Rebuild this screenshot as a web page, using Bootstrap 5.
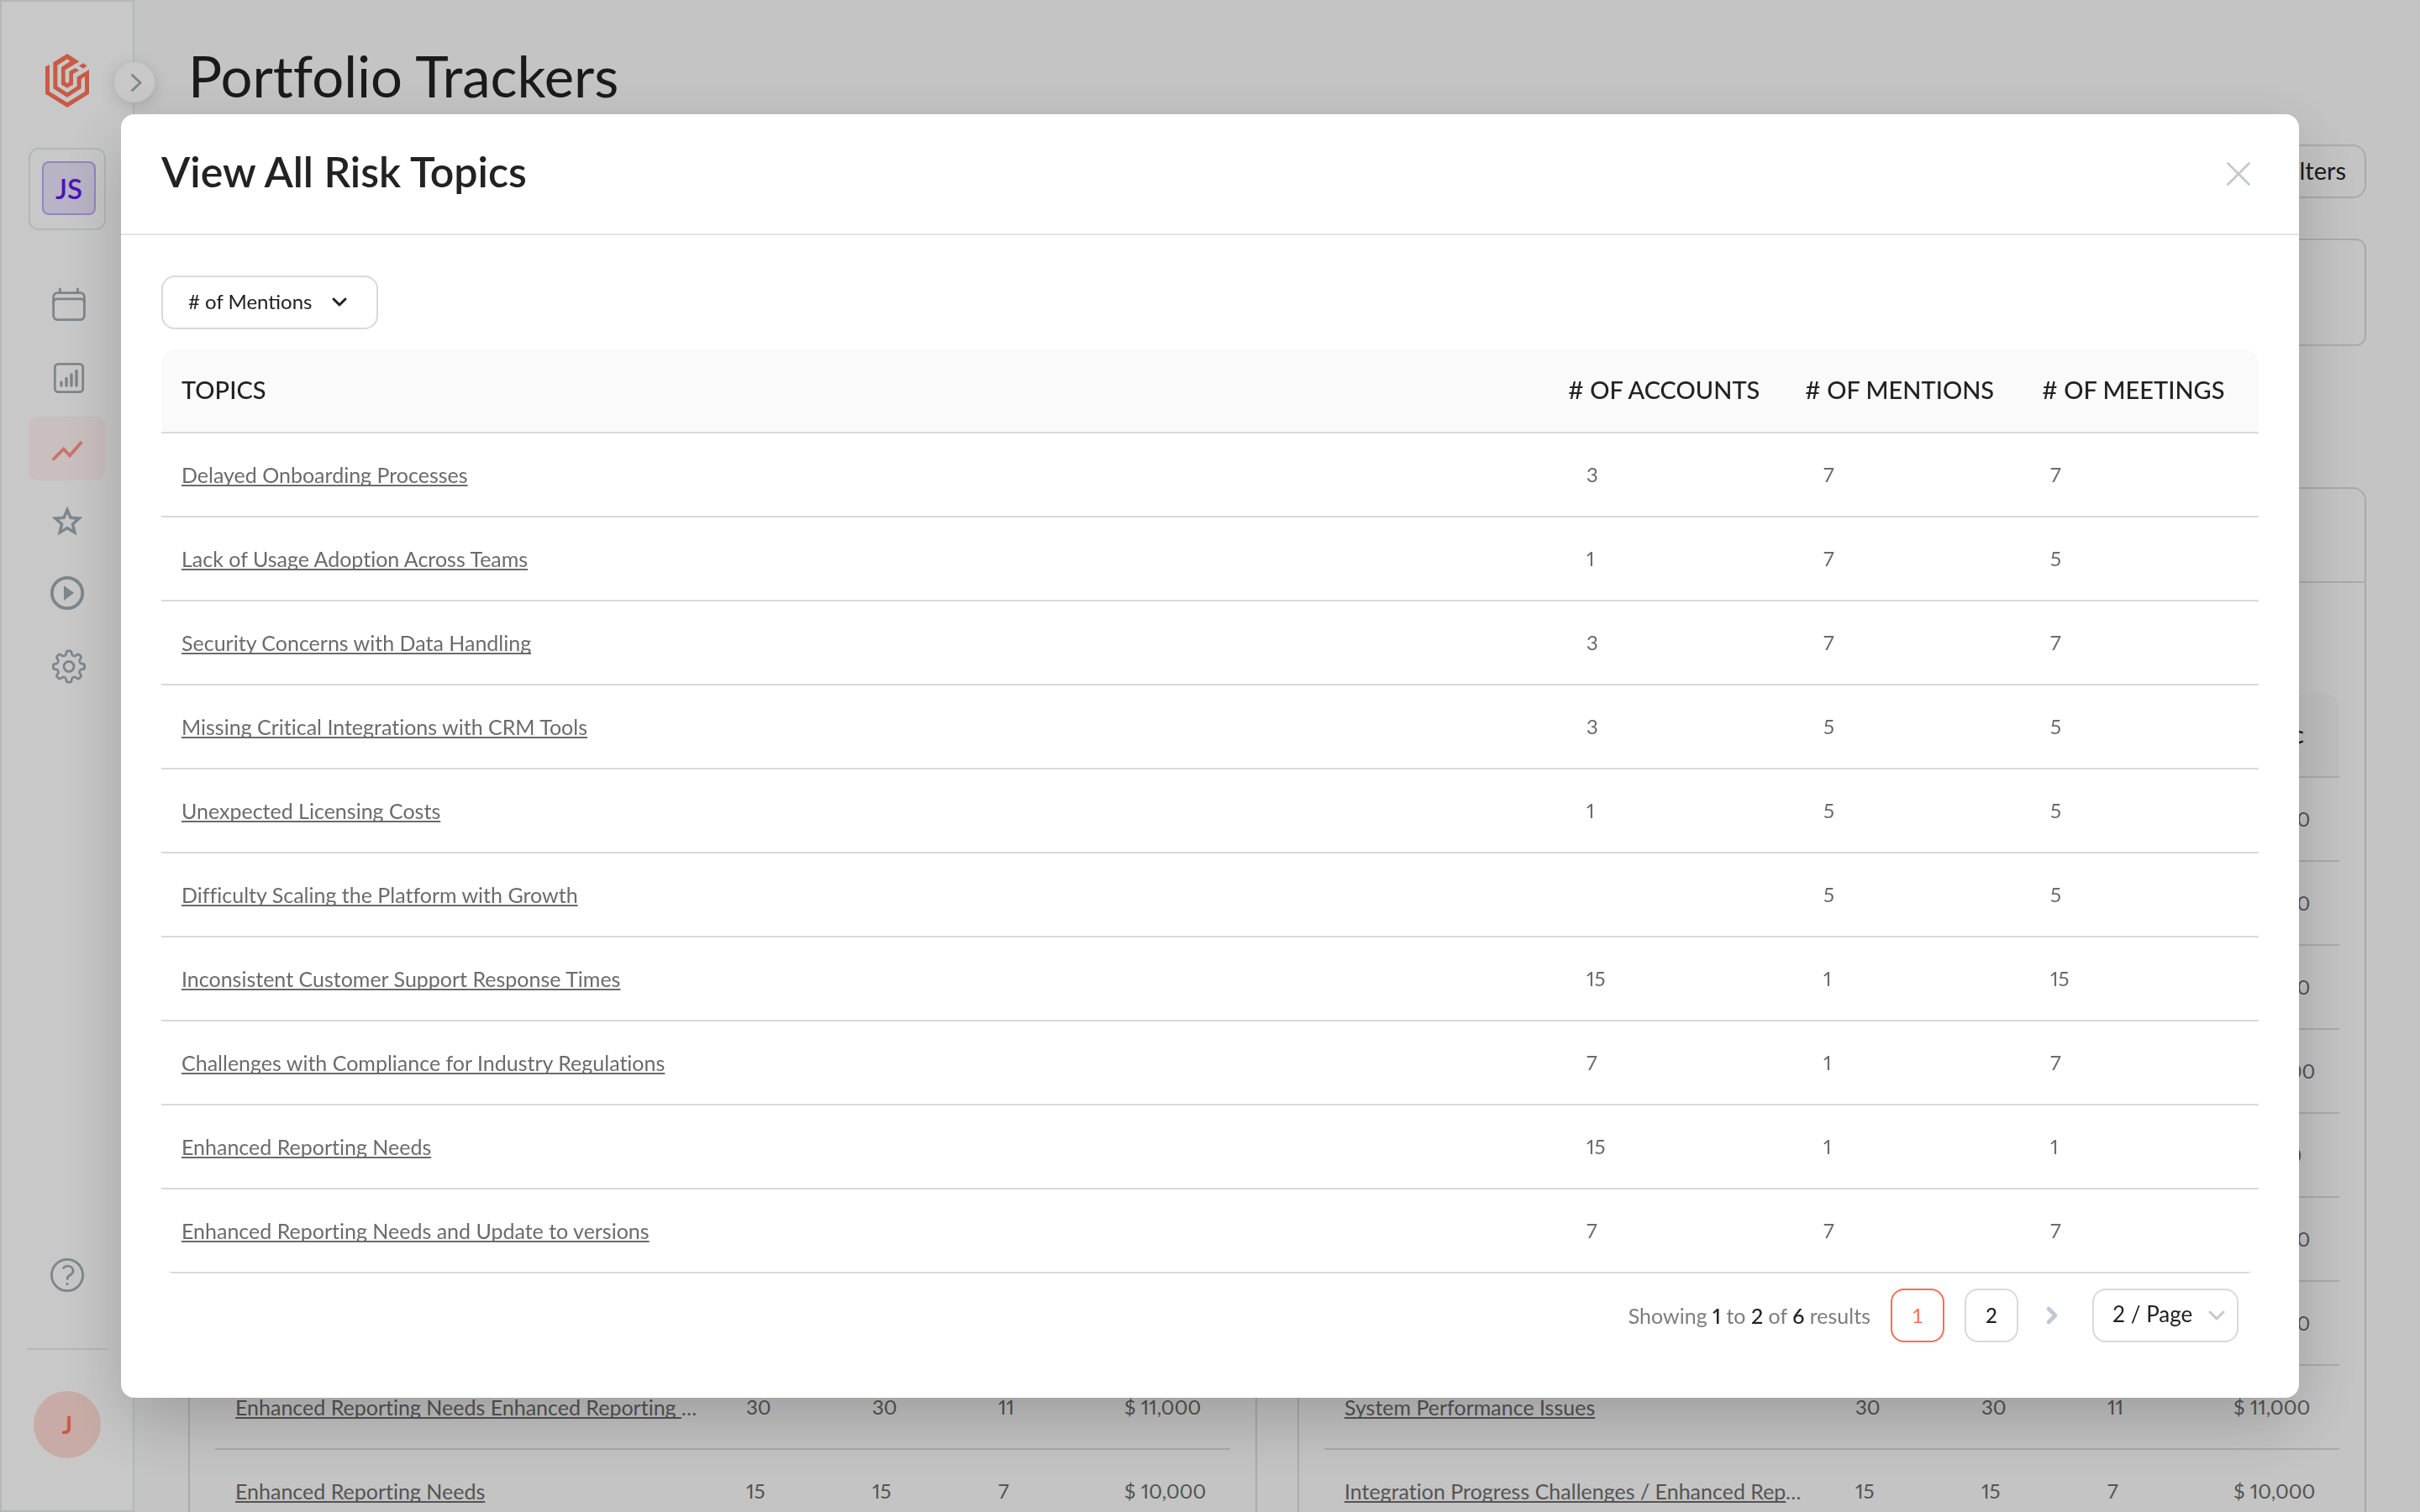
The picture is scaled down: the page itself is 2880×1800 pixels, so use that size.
<!DOCTYPE html>
<html lang="en">
<head>
<meta charset="utf-8">
<meta name="viewport" content="width=device-width, initial-scale=1">
<title>Portfolio Trackers</title>
<link href="https://cdn.jsdelivr.net/npm/bootstrap@5.3.0/dist/css/bootstrap.min.css" rel="stylesheet">
<style>
  :root {
    --ink: #222222;
    --muted: #6b6b6b;
    --line: #d9d9d9;
    --side-line: #e4ebe9;
    --icon: #9fabb3;
    --brand: #ff745a;
    --radius: 16px;
  }
  body {
    font-family: Lato, "Liberation Sans", sans-serif;
    font-size: 24px;
    font-variant-numeric: proportional-nums;
    font-variant-ligatures: none;
    line-height: 32px;
    color: var(--ink);
    background: #fafafa;
  }

  /* Sidebar */
  .side-rail {
    width: 160px;
    padding: 62px 0;
    border: 2px solid var(--side-line);
    background: #fff;
    color: var(--icon);
  }
  .side-rail svg { display: block; }
  .rail-toggle {
    top: 74px;
    left: 136px;
    width: 48px;
    height: 48px;
    background: #fff;
    color: var(--icon);
    box-shadow: 0 4px 20px rgba(0, 0, 0, .16);
  }
  .team-box {
    width: 92px;
    height: 98px;
    margin: 48px 0 50px;
    padding: 14px 10px 14px 14px;
    border: 2px solid var(--side-line);
    border-radius: 12px;
  }
  .team-tile {
    height: 64px;
    border: 2px solid #bba9fb;
    border-radius: 8px;
    background: #ebe4fc;
    color: #6319eb;
    font-size: 33px;
    font-weight: 600;
  }
  .rail-links { gap: 10px; }
  .rail-links a, .rail-help { color: inherit; }
  .rail-links a { width: 92px; height: 76px; border-radius: 12px; }
  .rail-links a.active { background: #fff4f2; color: #ff9584; }
  .rail-rule { width: 96px; height: 2px; margin: 63px 0 49px; background: var(--side-line); }
  .user-dot {
    width: 80px;
    height: 80px;
    background: #ffdbd4;
    color: var(--brand);
    font-size: 29px;
    font-weight: 700;
  }

  /* Page behind the dialog */
  .page-main { padding: 50px 64px 48px; }
  .page-title { font-size: 67px; font-weight: 400; line-height: 80px; }
  .outline-btn {
    height: 64px;
    padding: 0 22px 2px;
    border: 2px solid var(--line);
    border-radius: var(--radius);
    background: transparent;
    color: var(--ink);
    font-size: 29px;
  }
  .tool-row { margin: 42px 0 48px; }
  .summary-box { height: 128px; border: 2px solid var(--line); border-radius: 12px; }
  .section-title { margin: 60px 0; font-size: 29px; line-height: 48px; }
  .card-grid { gap: 48px; }
  .tracker { flex: 1 1 0; min-width: 0; border: 2px solid var(--line); border-radius: var(--radius); }
  .tracker-head { height: 112px; padding: 0 30px; border-bottom: 2px solid var(--line); font-size: 29px; }
  .tracker-body { padding: 32px 30px; }
  .tracker-tools { height: 68px; margin-bottom: 32px; }

  /* Tables */
  .topic-table { table-layout: fixed; width: 100%; border-collapse: separate; border-spacing: 0; }
  .topic-table th {
    height: 100px;
    padding: 0 0 2px 24px;
    border-bottom: 2px solid var(--line);
    background: #fafafa;
    font-size: 29px;
    font-weight: 500;
    white-space: nowrap;
  }
  .topic-table td {
    height: 100px;
    padding: 0 24px;
    border-bottom: 2px solid var(--line);
    color: var(--muted);
    white-space: nowrap;
  }
  .topic-table td.text-truncate { padding-right: 32px; }
  .topic-table a {
    color: inherit;
    font-size: 25px;
    text-decoration-skip-ink: none;
    text-underline-offset: 2px;
  }
  .rounded-wrap { border-radius: var(--radius); overflow: hidden; }
  .tracker .topic-table th { background: #f5f5f5; }
  .tracker col.num { width: 150px; }
  .tracker td:nth-child(n+2) { padding-right: 0; }
  .risk-modal col.num { width: 282px; }
  .risk-modal td:nth-child(n+2) { padding-left: 46px; }
  .risk-modal td:nth-child(4) { padding-left: 34px; }

  /* Dialog */
  .modal-backdrop { --bs-backdrop-bg: #000; --bs-backdrop-opacity: .216; }
  .risk-modal .modal-dialog { max-width: none; margin: 136px 144px; }
  .risk-modal .modal-content {
    border: 0;
    border-radius: var(--radius);
    color: var(--ink);
    box-shadow: 0 28px 80px rgba(0, 0, 0, .2);
  }
  .risk-modal .modal-header {
    padding: 37px 48px 43px;
    border-bottom: 2px solid #e4e4e4;
  }
  .risk-modal .modal-title { font-size: 50px; font-weight: 600; line-height: 62px; }
  .icon-btn { border: 0; padding: 0; background: none; color: #c1c8d0; }
  .icon-btn svg { display: block; }
  .risk-modal .modal-body { padding: 48px 48px 66px; }
  .pick {
    height: 64px;
    padding: 0 0 3px 30px;
    border: 2px solid var(--line);
    border-radius: var(--radius);
    color: var(--ink);
    font-size: 24px;
    background-color: #fff;
    background-size: 20px 20px;
  }
  .pick-sort {
    width: 258px;
    background-position: right 34px center;
    background-image: url("data:image/svg+xml,%3csvg xmlns='http://www.w3.org/2000/svg' viewBox='0 0 20 20'%3e%3cpath fill='none' stroke='%23222' stroke-width='3' stroke-linecap='round' stroke-linejoin='round' d='M3 6l7 7 7-7'/%3e%3c/svg%3e");
  }
  .pick-size {
    width: 174px;
    padding-left: 22px;
    font-size: 26px;
    background-position: right 14px center;
    background-image: url("data:image/svg+xml,%3csvg xmlns='http://www.w3.org/2000/svg' viewBox='0 0 20 20'%3e%3cpath fill='none' stroke='%23c1c8d0' stroke-width='3' stroke-linecap='round' stroke-linejoin='round' d='M2 6l8 8 8-8'/%3e%3c/svg%3e");
  }
  .pager { gap: 24px; padding: 18px 24px 0 0; }
  .pager-note { color: #7d7d7d; font-size: 25px; }
  .pager-note b { color: var(--ink); font-weight: 500; }
  .page-num {
    width: 64px;
    height: 64px;
    padding: 0;
    border: 2px solid var(--line);
    border-radius: var(--radius);
    background: #fff;
    color: var(--ink);
    font-weight: 500;
  }
  .page-num.current { border-color: #ff6b52; color: #ff6b52; font-weight: 400; }
</style>
</head>
<body class="overflow-hidden">

<div class="d-flex vh-100 overflow-hidden">
  <aside class="side-rail d-flex flex-column align-items-center flex-shrink-0 vh-100">
    <a href="#" aria-label="Home">
      <svg width="52" height="64" viewBox="162 72 156 192" fill="#ff745a"><path d="M162 118 177 111 177 207 240 246 303 207 303 153 290 163 290 196 240 228 190 196 190 103 240 72 283 100 233 130 233 172 240 178 247 172 247 135 268 123 283 131 261 144 261 182 240 194 219 182 219 120 250 99 240 91 205 113 205 188 240 211 275 188 275 155 318 128 318 215 240 264 162 215Z"/><path d="M297 106 311 115 297 125 282 115Z"/></svg>
    </a>
    <div class="team-box"><div class="team-tile d-flex align-items-center justify-content-center">JS</div></div>
    <nav class="rail-links d-flex flex-column" aria-label="Main">
      <a href="#" aria-label="Calendar" class="d-flex align-items-center justify-content-center">
        <svg width="48" height="48" viewBox="0 0 48 48" fill="none" stroke="currentColor" stroke-width="2.800" stroke-linecap="round"><rect x="7.600" y="10.600" width="36.800" height="32" rx="5"/><path d="M7.600 22.400q0-4.600 4.600-4.600h27.600q4.600 0 4.600 4.600M15.400 6v4M36.400 6v4"/></svg>
      </a>
      <a href="#" aria-label="Reports" class="d-flex align-items-center justify-content-center">
        <svg width="48" height="48" viewBox="0 0 48 48" fill="none" stroke="currentColor" stroke-linecap="round"><rect x="9.300" y="9.300" width="33.400" height="33.400" rx="4" stroke-width="2.800"/><path stroke-width="3.400" d="M17 31v4M23 26.500V35M29 22V35M35 17.500V35"/></svg>
      </a>
      <a href="#" aria-label="Trackers" class="active d-flex align-items-center justify-content-center">
        <svg width="48" height="48" viewBox="0 0 48 48" fill="none" stroke="currentColor" stroke-width="3.800"><path d="M6.700 37.500 19.700 24.500 27 32.500 41.300 16"/></svg>
      </a>
      <a href="#" aria-label="Favourites" class="d-flex align-items-center justify-content-center">
        <svg width="48" height="48" viewBox="0 0 48 48" fill="currentColor"><path transform="translate(2.900 3.800) scale(1.760)" stroke="currentColor" stroke-width=".4" d="M22 9.240l-7.190-.62L12 2 9.190 8.630 2 9.240l5.460 4.730L5.820 21 12 17.270 18.180 21l-1.630-7.030L22 9.240zM12 15.400l-3.760 2.270 1-4.280-3.320-2.880 4.380-.38L12 6.100l1.710 4.040 4.380.38-3.320 2.880 1 4.280L12 15.400z"/></svg>
      </a>
      <a href="#" aria-label="Recordings" class="d-flex align-items-center justify-content-center">
        <svg width="48" height="48" viewBox="0 0 48 48"><circle cx="24" cy="24" r="18.200" fill="none" stroke="currentColor" stroke-width="3.800"/><path fill="currentColor" d="M20 15l12 9-12 9z"/></svg>
      </a>
      <a href="#" aria-label="Settings" class="d-flex align-items-center justify-content-center">
        <svg width="48" height="48" viewBox="0 0 48 48" fill="none" stroke="currentColor" stroke-width="2.800">
          <defs><path id="tooth" d="M-5.300-12.800C-4-13.300-3.600-14-3.400-15.200L-3-17Q-2.700-18.600-1.200-18.600L1.200-18.600Q2.700-18.600 3-17L3.400-15.200C3.600-14 4-13.300 5.300-12.800"/></defs>
          <g transform="translate(26 25.500)"><circle r="6"/><use href="#tooth"/><use href="#tooth" transform="rotate(45)"/><use href="#tooth" transform="rotate(90)"/><use href="#tooth" transform="rotate(135)"/><use href="#tooth" transform="rotate(180)"/><use href="#tooth" transform="rotate(225)"/><use href="#tooth" transform="rotate(270)"/><use href="#tooth" transform="rotate(315)"/></g>
        </svg>
      </a>
    </nav>
    <a href="#" aria-label="Help" class="rail-help mt-auto">
      <svg width="48" height="48" viewBox="0 0 48 48" fill="none" stroke="currentColor" stroke-width="2.800" stroke-linecap="round"><circle cx="24" cy="24" r="18.600"/><path d="M19.500 15.500C21 13.500 22.500 13.200 24.300 13.200C28 13.200 31 15.500 31 18.800C31 21.500 29.500 22.800 27.300 24C25 25.200 24.200 26 24.200 28.500"/><circle cx="24" cy="34.300" r="1.600" fill="currentColor" stroke="none"/></svg>
    </a>
    <div class="rail-rule"></div>
    <div class="user-dot rounded-circle d-flex align-items-center justify-content-center">J</div>
    <button type="button" aria-label="Expand menu" class="rail-toggle position-absolute rounded-circle border-0 p-0 d-flex align-items-center justify-content-center">
      <svg width="24" height="24" viewBox="0 0 24 24" fill="none" stroke="currentColor" stroke-width="3" stroke-linecap="round" stroke-linejoin="round"><path d="M9.500 3.500 19 12.500 9.500 21.500"/></svg>
    </button>
  </aside>

  <main class="page-main flex-grow-1">
    <h1 class="page-title mb-0">Portfolio Trackers</h1>
    <div class="tool-row d-flex justify-content-end">
      <button type="button" class="outline-btn">Filters</button>
    </div>
    <div class="summary-box"></div>
    <h2 class="section-title">Topics</h2>
    <div class="card-grid d-flex">
      <section class="tracker">
        <div class="tracker-head d-flex align-items-center">Risk Topics</div>
        <div class="tracker-body">
          <div class="tracker-tools"></div>
          <div class="rounded-wrap">
            <table class="topic-table">
              <colgroup><col><col class="num"><col class="num"><col class="num"><col class="num"></colgroup>
              <thead><tr><th>Topics</th><th>Acc.</th><th>Ment.</th><th>Meet.</th><th>Metric</th></tr></thead>
              <tbody>
                <tr><td><a href="#">Delayed Onboarding Processes</a></td><td>30</td><td>30</td><td>11</td><td>$ 11,000</td></tr>
                <tr><td><a href="#">Lack of Usage Adoption</a></td><td>30</td><td>30</td><td>11</td><td>$ 11,000</td></tr>
                <tr><td><a href="#">Security Concerns</a></td><td>30</td><td>30</td><td>11</td><td>$ 11,000</td></tr>
                <tr><td><a href="#">Missing Critical Integrations</a></td><td>15</td><td>15</td><td>7</td><td>$ 10,000</td></tr>
                <tr><td><a href="#">Unexpected Licensing Costs</a></td><td>15</td><td>15</td><td>7</td><td>$ 9,500</td></tr>
                <tr><td><a href="#">Difficulty Scaling</a></td><td>30</td><td>30</td><td>11</td><td>$ 11,000</td></tr>
                <tr><td><a href="#">Inconsistent Support</a></td><td>30</td><td>30</td><td>11</td><td>$ 11,000</td></tr>
                <tr><td class="text-truncate"><a href="#">Enhanced Reporting Needs Enhanced Reporting Needs</a></td><td>30</td><td>30</td><td>11</td><td>$ 11,000</td></tr>
                <tr><td><a href="#">Enhanced Reporting Needs</a></td><td>15</td><td>15</td><td>7</td><td>$ 10,000</td></tr>
              </tbody>
            </table>
          </div>
        </div>
      </section>
      <section class="tracker">
        <div class="tracker-head d-flex align-items-center">Product Topics</div>
        <div class="tracker-body">
          <div class="tracker-tools"></div>
          <div class="rounded-wrap">
            <table class="topic-table">
              <colgroup><col><col class="num"><col class="num"><col class="num"><col class="num"></colgroup>
              <thead><tr><th>Topics</th><th>Acc.</th><th>Ment.</th><th>Meet.</th><th>Metric</th></tr></thead>
              <tbody>
                <tr><td><a href="#">Reporting Needs</a></td><td>30</td><td>30</td><td>11</td><td>$ 11,000</td></tr>
                <tr><td><a href="#">Dashboard Filters</a></td><td>30</td><td>30</td><td>11</td><td>$ 11,000</td></tr>
                <tr><td><a href="#">Data Export</a></td><td>30</td><td>30</td><td>11</td><td>$ 11,000</td></tr>
                <tr><td><a href="#">Access Roles</a></td><td>15</td><td>15</td><td>7</td><td>$ 10,000</td></tr>
                <tr><td><a href="#">Mobile App</a></td><td>15</td><td>15</td><td>7</td><td>$ 9,500</td></tr>
                <tr><td><a href="#">Search Quality</a></td><td>30</td><td>30</td><td>11</td><td>$ 11,000</td></tr>
                <tr><td><a href="#">Alerts</a></td><td>30</td><td>30</td><td>11</td><td>$ 11,000</td></tr>
                <tr><td><a href="#">System Performance Issues</a></td><td>30</td><td>30</td><td>11</td><td>$ 11,000</td></tr>
                <tr><td class="text-truncate"><a href="#">Integration Progress Challenges / Enhanced Reporting Needs</a></td><td>15</td><td>15</td><td>7</td><td>$ 10,000</td></tr>
              </tbody>
            </table>
          </div>
        </div>
      </section>
    </div>
  </main>
</div>

<div class="modal-backdrop show"></div>

<div class="modal risk-modal d-block overflow-hidden" role="dialog" aria-modal="true" aria-labelledby="riskTitle">
  <div class="modal-dialog">
    <div class="modal-content">
      <div class="modal-header">
        <h2 class="modal-title" id="riskTitle">View All Risk Topics</h2>
        <button type="button" class="icon-btn" aria-label="Close">
          <svg width="48" height="48" viewBox="0 0 48 48" fill="none" stroke="currentColor" stroke-width="2.600" stroke-linecap="round"><path d="M11.500 14.500l25 25M36.500 14.500l-25 25"/></svg>
        </button>
      </div>
      <div class="modal-body">
        <label for="sortBy" class="visually-hidden">Sort by</label>
        <select id="sortBy" class="form-select pick pick-sort mb-4"><option># of Mentions</option><option># of Accounts</option><option># of Meetings</option></select>
        <div class="rounded-wrap">
          <table class="topic-table">
            <colgroup><col><col class="num"><col class="num"><col class="num"></colgroup>
            <thead><tr><th>TOPICS</th><th># OF ACCOUNTS</th><th># OF MENTIONS</th><th># OF MEETINGS</th></tr></thead>
            <tbody>
              <tr><td><a href="#">Delayed Onboarding Processes</a></td><td>3</td><td>7</td><td>7</td></tr>
              <tr><td><a href="#">Lack of Usage Adoption Across Teams</a></td><td>1</td><td>7</td><td>5</td></tr>
              <tr><td><a href="#">Security Concerns with Data Handling</a></td><td>3</td><td>7</td><td>7</td></tr>
              <tr><td><a href="#">Missing Critical Integrations with CRM Tools</a></td><td>3</td><td>5</td><td>5</td></tr>
              <tr><td><a href="#">Unexpected Licensing Costs</a></td><td>1</td><td>5</td><td>5</td></tr>
              <tr><td><a href="#">Difficulty Scaling the Platform with Growth</a></td><td></td><td>5</td><td>5</td></tr>
              <tr><td><a href="#">Inconsistent Customer Support Response Times</a></td><td>15</td><td>1</td><td>15</td></tr>
              <tr><td><a href="#">Challenges with Compliance for Industry Regulations</a></td><td>7</td><td>1</td><td>7</td></tr>
              <tr><td><a href="#">Enhanced Reporting Needs</a></td><td>15</td><td>1</td><td>1</td></tr>
              <tr><td><a href="#">Enhanced Reporting Needs and Update to versions</a></td><td>7</td><td>7</td><td>7</td></tr>
            </tbody>
          </table>
        </div>
        <div class="pager d-flex align-items-center justify-content-end">
          <div class="pager-note">Showing <b>1</b> to <b>2</b> of <b>6</b> results</div>
          <button type="button" class="page-num current" aria-current="page">1</button>
          <button type="button" class="page-num">2</button>
          <button type="button" class="icon-btn" aria-label="Next page">
            <svg width="40" height="40" viewBox="0 0 40 40" fill="none" stroke="currentColor" stroke-width="4.600" stroke-linecap="round" stroke-linejoin="round"><path d="M12 12l8 8-8 8"/></svg>
          </button>
          <label for="pageSize" class="visually-hidden">Results per page</label>
          <select id="pageSize" class="form-select pick pick-size"><option>2 / Page</option><option>5 / Page</option><option>10 / Page</option></select>
        </div>
      </div>
    </div>
  </div>
</div>

<script src="https://cdn.jsdelivr.net/npm/bootstrap@5.3.0/dist/js/bootstrap.bundle.min.js"></script>
</body>
</html>
